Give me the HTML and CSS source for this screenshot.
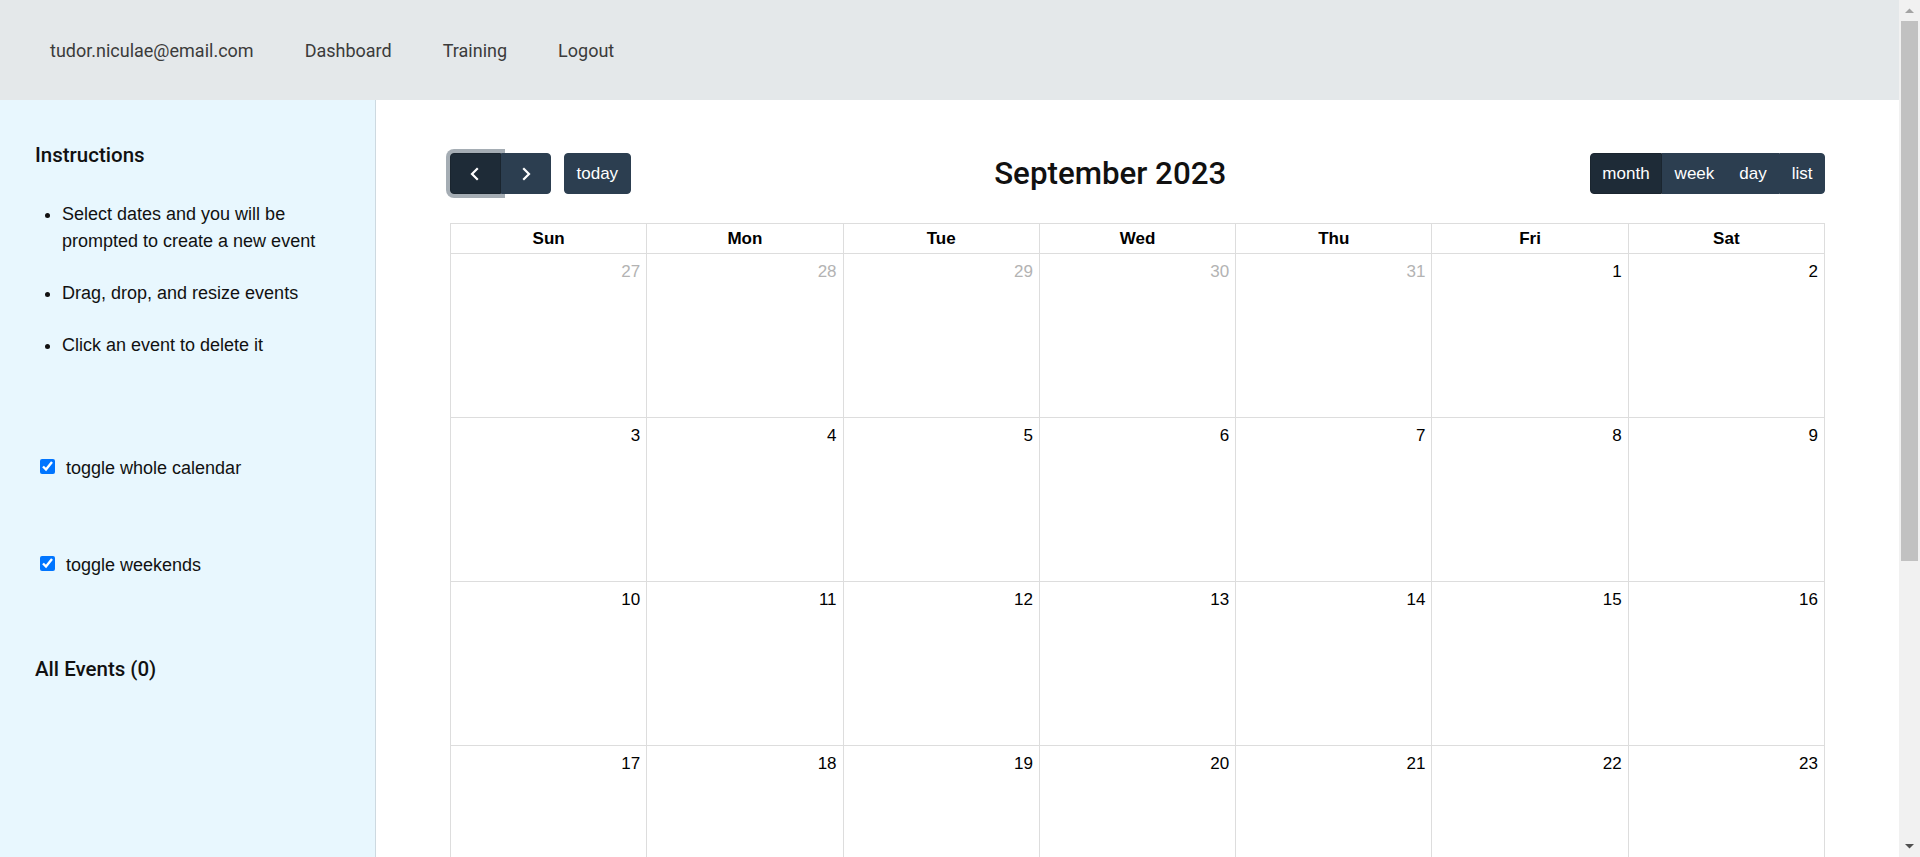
FILE: index.html
```html
<!DOCTYPE html>
<html lang="en">
<head>
<meta charset="utf-8">
<title>Calendar</title>
<link rel="stylesheet" href="styles.css">
</head>
<body>
<div class="app">
  <header class="topbar">
    <a class="nav-link" href="#">tudor.niculae@email.com</a>
    <a class="nav-link" href="#">Dashboard</a>
    <a class="nav-link" href="#">Training</a>
    <a class="nav-link" href="#">Logout</a>
  </header>
  <div class="layout">
    <aside class="sidebar">
      <h3 class="sidebar-title">Instructions</h3>
      <ul class="instructions">
        <li>Select dates and you will be prompted to create a new event</li>
        <li>Drag, drop, and resize events</li>
        <li>Click an event to delete it</li>
      </ul>
      <label class="toggle toggle-calendar"><input class="toggle-box" type="checkbox" checked>toggle whole calendar</label>
      <label class="toggle toggle-weekends"><input class="toggle-box" type="checkbox" checked>toggle weekends</label>
      <h3 class="sidebar-title events-title">All Events (0)</h3>
    </aside>
    <main class="main">
      <div class="toolbar">
        <div class="toolbar-chunk">
          <div class="btn-group">
            <button class="btn btn-icon btn-active btn-focus" type="button" aria-label="prev">
              <svg width="16" height="16" viewBox="0 0 16 16"><path d="M10 3 L5 8 L10 13" fill="none" stroke="#fff" stroke-width="2.2" stroke-linecap="square"/></svg>
            </button>
            <button class="btn btn-icon" type="button" aria-label="next">
              <svg width="16" height="16" viewBox="0 0 16 16"><path d="M6 3 L11 8 L6 13" fill="none" stroke="#fff" stroke-width="2.2" stroke-linecap="square"/></svg>
            </button>
          </div>
          <button class="btn" type="button">today</button>
        </div>
        <h2 class="toolbar-title">September 2023</h2>
        <div class="btn-group">
          <button class="btn btn-active" type="button">month</button>
          <button class="btn" type="button">week</button>
          <button class="btn" type="button">day</button>
          <button class="btn" type="button">list</button>
        </div>
      </div>
      <div class="month-grid">
        <div class="dow">Sun</div><div class="dow">Mon</div><div class="dow">Tue</div><div class="dow">Wed</div><div class="dow">Thu</div><div class="dow">Fri</div><div class="dow">Sat</div>
        <div class="day other"><span class="num">27</span></div>
        <div class="day other"><span class="num">28</span></div>
        <div class="day other"><span class="num">29</span></div>
        <div class="day other"><span class="num">30</span></div>
        <div class="day other"><span class="num">31</span></div>
        <div class="day"><span class="num">1</span></div>
        <div class="day"><span class="num">2</span></div>
        <div class="day"><span class="num">3</span></div>
        <div class="day"><span class="num">4</span></div>
        <div class="day"><span class="num">5</span></div>
        <div class="day"><span class="num">6</span></div>
        <div class="day"><span class="num">7</span></div>
        <div class="day"><span class="num">8</span></div>
        <div class="day"><span class="num">9</span></div>
        <div class="day"><span class="num">10</span></div>
        <div class="day"><span class="num">11</span></div>
        <div class="day"><span class="num">12</span></div>
        <div class="day"><span class="num">13</span></div>
        <div class="day"><span class="num">14</span></div>
        <div class="day"><span class="num">15</span></div>
        <div class="day"><span class="num">16</span></div>
        <div class="day"><span class="num">17</span></div>
        <div class="day"><span class="num">18</span></div>
        <div class="day"><span class="num">19</span></div>
        <div class="day"><span class="num">20</span></div>
        <div class="day"><span class="num">21</span></div>
        <div class="day"><span class="num">22</span></div>
        <div class="day"><span class="num">23</span></div>
        <div class="day"><span class="num">24</span></div>
        <div class="day"><span class="num">25</span></div>
        <div class="day"><span class="num">26</span></div>
        <div class="day"><span class="num">27</span></div>
        <div class="day"><span class="num">28</span></div>
        <div class="day"><span class="num">29</span></div>
        <div class="day"><span class="num">30</span></div>
        <div class="day other"><span class="num">1</span></div>
        <div class="day other"><span class="num">2</span></div>
        <div class="day other"><span class="num">3</span></div>
        <div class="day other"><span class="num">4</span></div>
        <div class="day other"><span class="num">5</span></div>
        <div class="day other"><span class="num">6</span></div>
        <div class="day other"><span class="num">7</span></div>
      </div>
    </main>
  </div>
</div>
<div class="scrollbar">
  <div class="sb-arrow">
    <svg width="21" height="21" viewBox="0 0 21 21"><path d="M6 13 L15 13 L10.5 8.5 Z" fill="#a3a3a3"/></svg>
  </div>
  <div class="sb-thumb"></div>
  <div class="sb-track"></div>
  <div class="sb-arrow">
    <svg width="21" height="21" viewBox="0 0 21 21"><path d="M6 8 L15 8 L10.5 12.5 Z" fill="#505050"/></svg>
  </div>
</div>
</body>
</html>
```
FILE: styles.css
```css
* { box-sizing: border-box; }

html, body {
  margin: 0;
  height: 100%;
  overflow: hidden;
}

body {
  display: flex;
  font-family: "Liberation Sans", Arial, sans-serif;
  color: #111;
  background: #fff;
}

.app {
  flex: 1;
  min-width: 0;
  height: 100vh;
  display: flex;
  flex-direction: column;
  overflow: hidden;
}

/* top navigation */
.topbar {
  flex: 0 0 100px;
  height: 100px;
  background: #e4e8ea;
  display: flex;
  align-items: center;
  gap: 51px;
  padding: 2px 0 0 50px;
}

.nav-link {
  font-family: Roboto, "Liberation Sans", sans-serif;
  font-size: 18px;
  color: #3b3b3b;
  text-decoration: none;
  line-height: 24px;
}

.layout {
  flex: 1;
  display: flex;
  min-height: 0;
}

/* sidebar */
.sidebar {
  flex: 0 0 376px;
  width: 376px;
  background: #e8f7fe;
  border-right: 1px solid #cdd9e0;
  padding: 43px 36px 0 35px;
}

.sidebar-title {
  font-family: Roboto, "Liberation Sans", sans-serif;
  font-weight: 500;
  font-size: 20.5px;
  line-height: 24px;
  margin: 0;
  color: #111;
}

.instructions {
  margin: 34px 0 0 0;
  padding-left: 27px;
  font-size: 18px;
  line-height: 27px;
}

.instructions li {
  margin-bottom: 25px;
}

.instructions li:last-child {
  margin-bottom: 0;
}

.toggle {
  display: flex;
  align-items: center;
  font-size: 18px;
  line-height: 27px;
}

.toggle-calendar { margin-top: 96px; }
.toggle-weekends { margin-top: 70px; }

.toggle-box {
  width: 15px;
  height: 15px;
  margin: -4px 11px 0 5px;
  accent-color: #0075ff;
}

.events-title { margin-top: 78px; }

/* main calendar */
.main {
  flex: 1;
  min-width: 0;
  padding: 53px 74px 0 74px;
  background: #fff;
}

.toolbar {
  display: flex;
  justify-content: space-between;
  align-items: center;
  height: 41px;
  margin-bottom: 29px;
}

.toolbar-chunk {
  display: flex;
  align-items: center;
  gap: 13px;
}

.toolbar-title {
  margin: 0;
  font-family: Roboto, "Liberation Sans", sans-serif;
  font-weight: 500;
  font-size: 31.3px;
  line-height: 40px;
  color: #111;
}

.btn-group {
  display: flex;
}

.btn {
  font-family: "Liberation Sans", Arial, sans-serif;
  font-size: 17px;
  line-height: 25px;
  height: 41px;
  padding: 7px 11.5px;
  color: #fff;
  background: #2c3e50;
  border: 1px solid #2c3e50;
  border-radius: 4px;
  cursor: pointer;
  display: flex;
  align-items: center;
  justify-content: center;
}

.btn-group .btn { border-radius: 0; }
.btn-group .btn:first-child { border-radius: 4px 0 0 4px; }
.btn-group .btn:last-child { border-radius: 0 4px 4px 0; }

.btn-icon {
  width: 50.5px;
  padding: 0;
}

.btn-active {
  background: #1e2b37;
  border-color: #1a252f;
}

.btn-focus {
  box-shadow: 0 0 0 4px rgba(76, 91, 106, 0.5);
}

/* month grid */
.month-grid {
  display: grid;
  grid-template-columns: repeat(7, 1fr);
  grid-auto-rows: 163px;
  grid-template-rows: 29px;
  gap: 1px;
  background: #ddd;
  border: 1px solid #ddd;
}

.dow {
  background: #fff;
  text-align: center;
  font-weight: bold;
  font-size: 17px;
  line-height: 29px;
  color: #000;
}

.day {
  background: #fff;
  text-align: right;
  padding: 8px 6px 0 0;
}

.num {
  font-size: 17px;
  line-height: 20px;
  color: #000;
}

.day.other .num {
  color: #b3b3b3;
}

/* fake classic scrollbar */
.scrollbar {
  flex: 0 0 21px;
  width: 21px;
  height: 100vh;
  background: #f1f1f1;
  display: flex;
  flex-direction: column;
}

.sb-arrow {
  flex: 0 0 21px;
  height: 21px;
  display: flex;
}

.sb-thumb {
  flex: 0 0 540px;
  margin: 0 2px;
  background: #c1c1c1;
}

.sb-track { flex: 1; }
```
